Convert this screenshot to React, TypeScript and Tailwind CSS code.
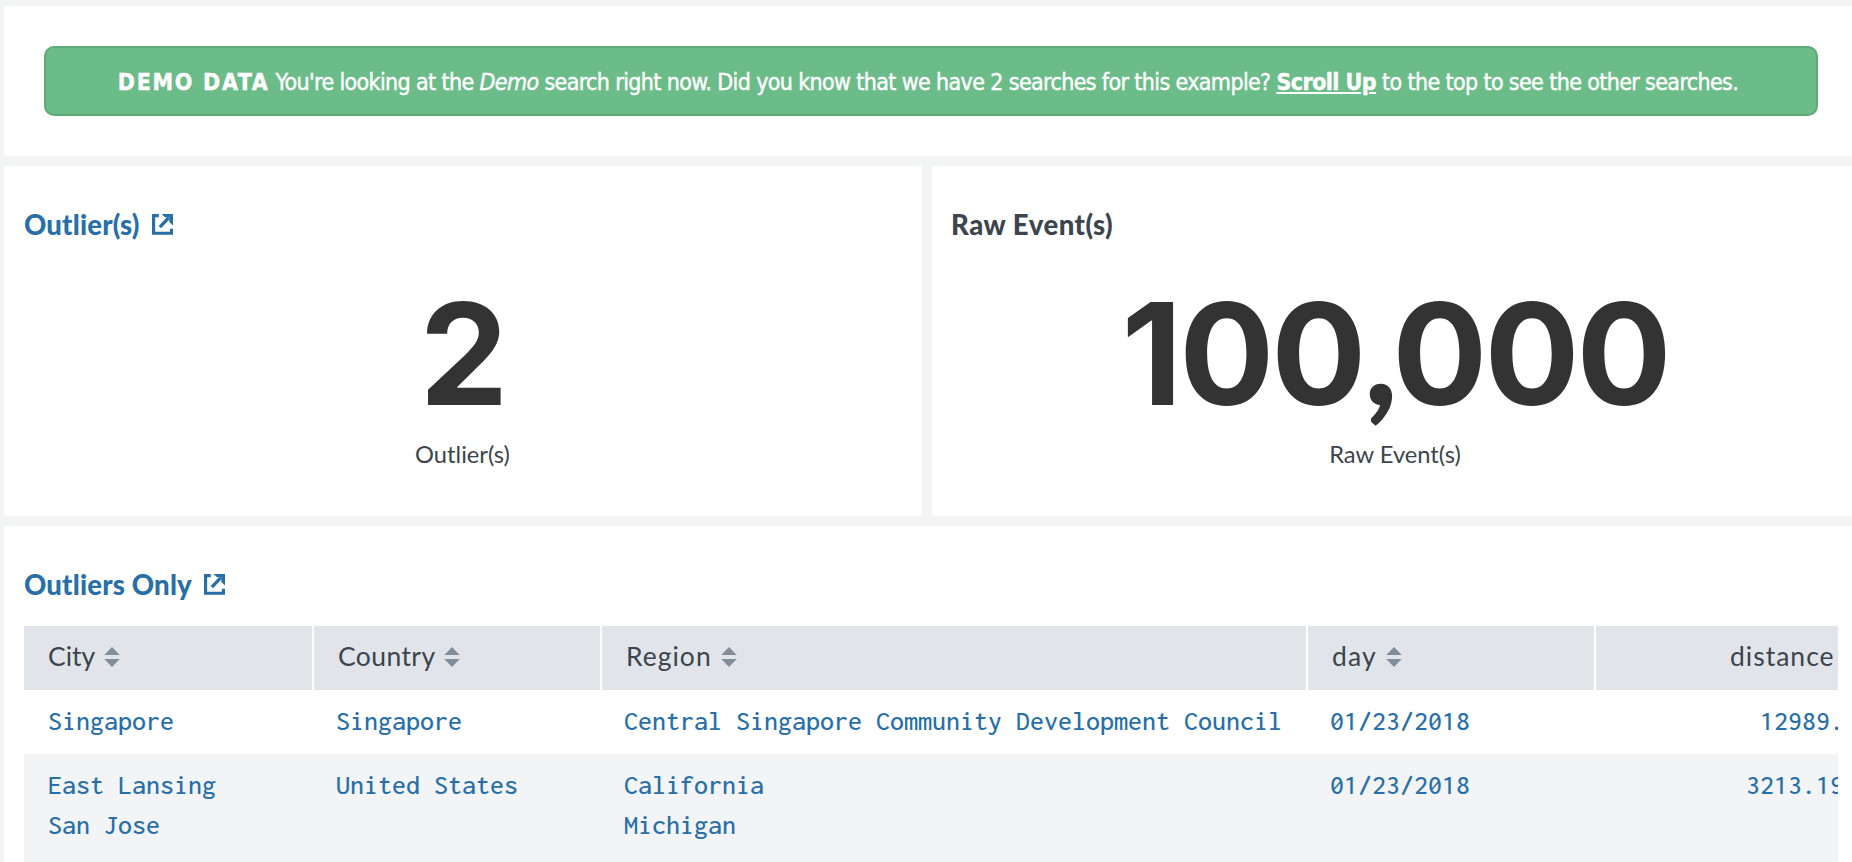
import React from "react";

function ExternalIcon() {
  return (
    <svg width="21" height="21" viewBox="0 0 20 20" fill="none" stroke="currentColor" className="shrink-0">
      <path d="M6.5 1.5H1.5V18.3H18.5V14" strokeWidth="3" />
      <path d="M7.5 12.5L16 3.5" strokeWidth="3.2" />
      <path d="M9 0H20V11L16.5 7.5L16.5 3.2L12.5 3.2Z" fill="currentColor" stroke="none" />
    </svg>
  );
}

function SortIcon() {
  return (
    <svg width="16" height="20" viewBox="0 0 16 20" fill="#818d99" className="shrink-0">
      <path d="M8 0L15.7 8H0.3Z" />
      <path d="M8 20L0.3 12H15.7Z" />
    </svg>
  );
}

function Heading({ children, link = false }: { children: string; link?: boolean }) {
  return (
    <h2 className={`flex h-8 items-center gap-[12px] pb-px text-[27.5px] font-black ${link ? "tracking-[0.2px] text-[#286fa8]" : "tracking-[0.5px] text-[#3c444d]"}`}>
      <span>{children}</span>
      {link && <ExternalIcon />}
    </h2>
  );
}

function HeaderCell({ label, className }: { label: string; className: string }) {
  return (
    <div className={`flex h-16 shrink-0 items-center gap-[9px] bg-[#e1e5e9] pb-[2px] text-[26.5px] text-[#3c444d] ${className}`}>
      <span>{label}</span>
      <SortIcon />
    </div>
  );
}

function Metric({ value, label, className }: { value: string; label: string; className: string }) {
  const [head, tail] = value.split(",");
  return (
    <div className={`mt-[41px] flex flex-col items-center ${className}`}>
      <div className="flex h-[144px] font-['Inter',sans-serif] text-[141px] leading-[144px] font-bold tracking-[-3px] text-[#333]">
        <span>{head}</span>
        {tail && (
          <>
            <span className="flex w-[29px] justify-center pl-[6px] font-['Lato',sans-serif] leading-[138px] font-black tracking-normal">,</span>
            <span>{tail}</span>
          </>
        )}
      </div>
      <div className="mt-[12px] text-[23.7px] leading-8 text-[#3c444d]">{label}</div>
    </div>
  );
}

const rows = [
  { city: ["Singapore"], country: "Singapore", region: ["Central Singapore Community Development Council"], day: "01/23/2018", distance: "12989.4712", h: "h-16" },
  { city: ["East Lansing", "San Jose"], country: "United States", region: ["California", "Michigan"], day: "01/23/2018", distance: "3213.195314", h: "h-[108px] bg-[#f2f4f5]" },
];

export default function App() {
  return (
    <div className="flex h-[862px] w-[1852px] flex-col gap-[10px] overflow-hidden bg-[#f2f4f5] pt-[6px] pl-1 font-['Lato',sans-serif]">
      <section className="h-[150px] shrink-0 bg-white pt-10 pl-10">
        <div className="flex h-[70px] w-[1774px] items-center justify-center rounded-[10px] border-2 border-[#5caa78] bg-[#6cbc8a] pt-[2px] pr-[6px] font-['DejaVu_Sans_Condensed','DejaVu_Sans',sans-serif] text-[23px] font-stretch-condensed whitespace-pre text-white">
          <p className="tracking-[-0.63px] [-webkit-text-stroke:0.4px_white]">
            <strong className="tracking-[1.7px]">DEMO DATA</strong> You're looking at the <em>Demo</em> search right now. Did you know that we have 2 searches for this example? <a className="font-bold tracking-[-0.55px] underline">Scroll Up</a> to the top to see the other searches.
          </p>
        </div>
      </section>
      <div className="flex h-[350px] shrink-0 gap-[10px]">
        <section className="w-[918px] shrink-0 bg-white pt-[43px] pl-5">
          <Heading link>Outlier(s)</Heading>
          <Metric value="2" label="Outlier(s)" className="mr-[21px]" />
        </section>
        <section className="flex-1 bg-white pt-[43px] pl-[19px]">
          <Heading>Raw Event(s)</Heading>
          <Metric value="100,000" label="Raw Event(s)" className="mr-[13px]" />
        </section>
      </div>
      <section className="flex-1 bg-white pt-[43px] pl-5">
        <Heading link>Outliers Only</Heading>
        <div className="mt-[25px] w-[1814px] overflow-hidden">
          <div className="flex gap-[2px]">
            <HeaderCell label="City" className="w-[288px] pl-6" />
            <HeaderCell label="Country" className="w-[286px] pl-6 tracking-[0.4px]" />
            <HeaderCell label="Region" className="w-[704px] pl-6 tracking-[1px]" />
            <HeaderCell label="day" className="w-[286px] pl-6 tracking-[1.1px]" />
            <HeaderCell label="distance" className="w-[260px] pl-[134px] tracking-[1px]" />
          </div>
          {rows.map((r) => (
            <div key={r.country} className={`flex pt-[11px] pl-6 font-['Inconsolata','DejaVu_Sans_Mono',monospace] text-[28px] leading-10 font-medium whitespace-nowrap text-[#286fa8] ${r.h}`}>
              <div className="w-[288px] shrink-0">{r.city.map((c) => <div key={c}>{c}</div>)}</div>
              <div className="w-[288px] shrink-0">{r.country}</div>
              <div className="w-[706px] shrink-0">{r.region.map((c) => <div key={c}>{c}</div>)}</div>
              <div className="w-[266px] shrink-0">{r.day}</div>
              <div className="w-[304px] shrink-0 text-right">{r.distance}</div>
            </div>
          ))}
        </div>
      </section>
    </div>
  );
}
